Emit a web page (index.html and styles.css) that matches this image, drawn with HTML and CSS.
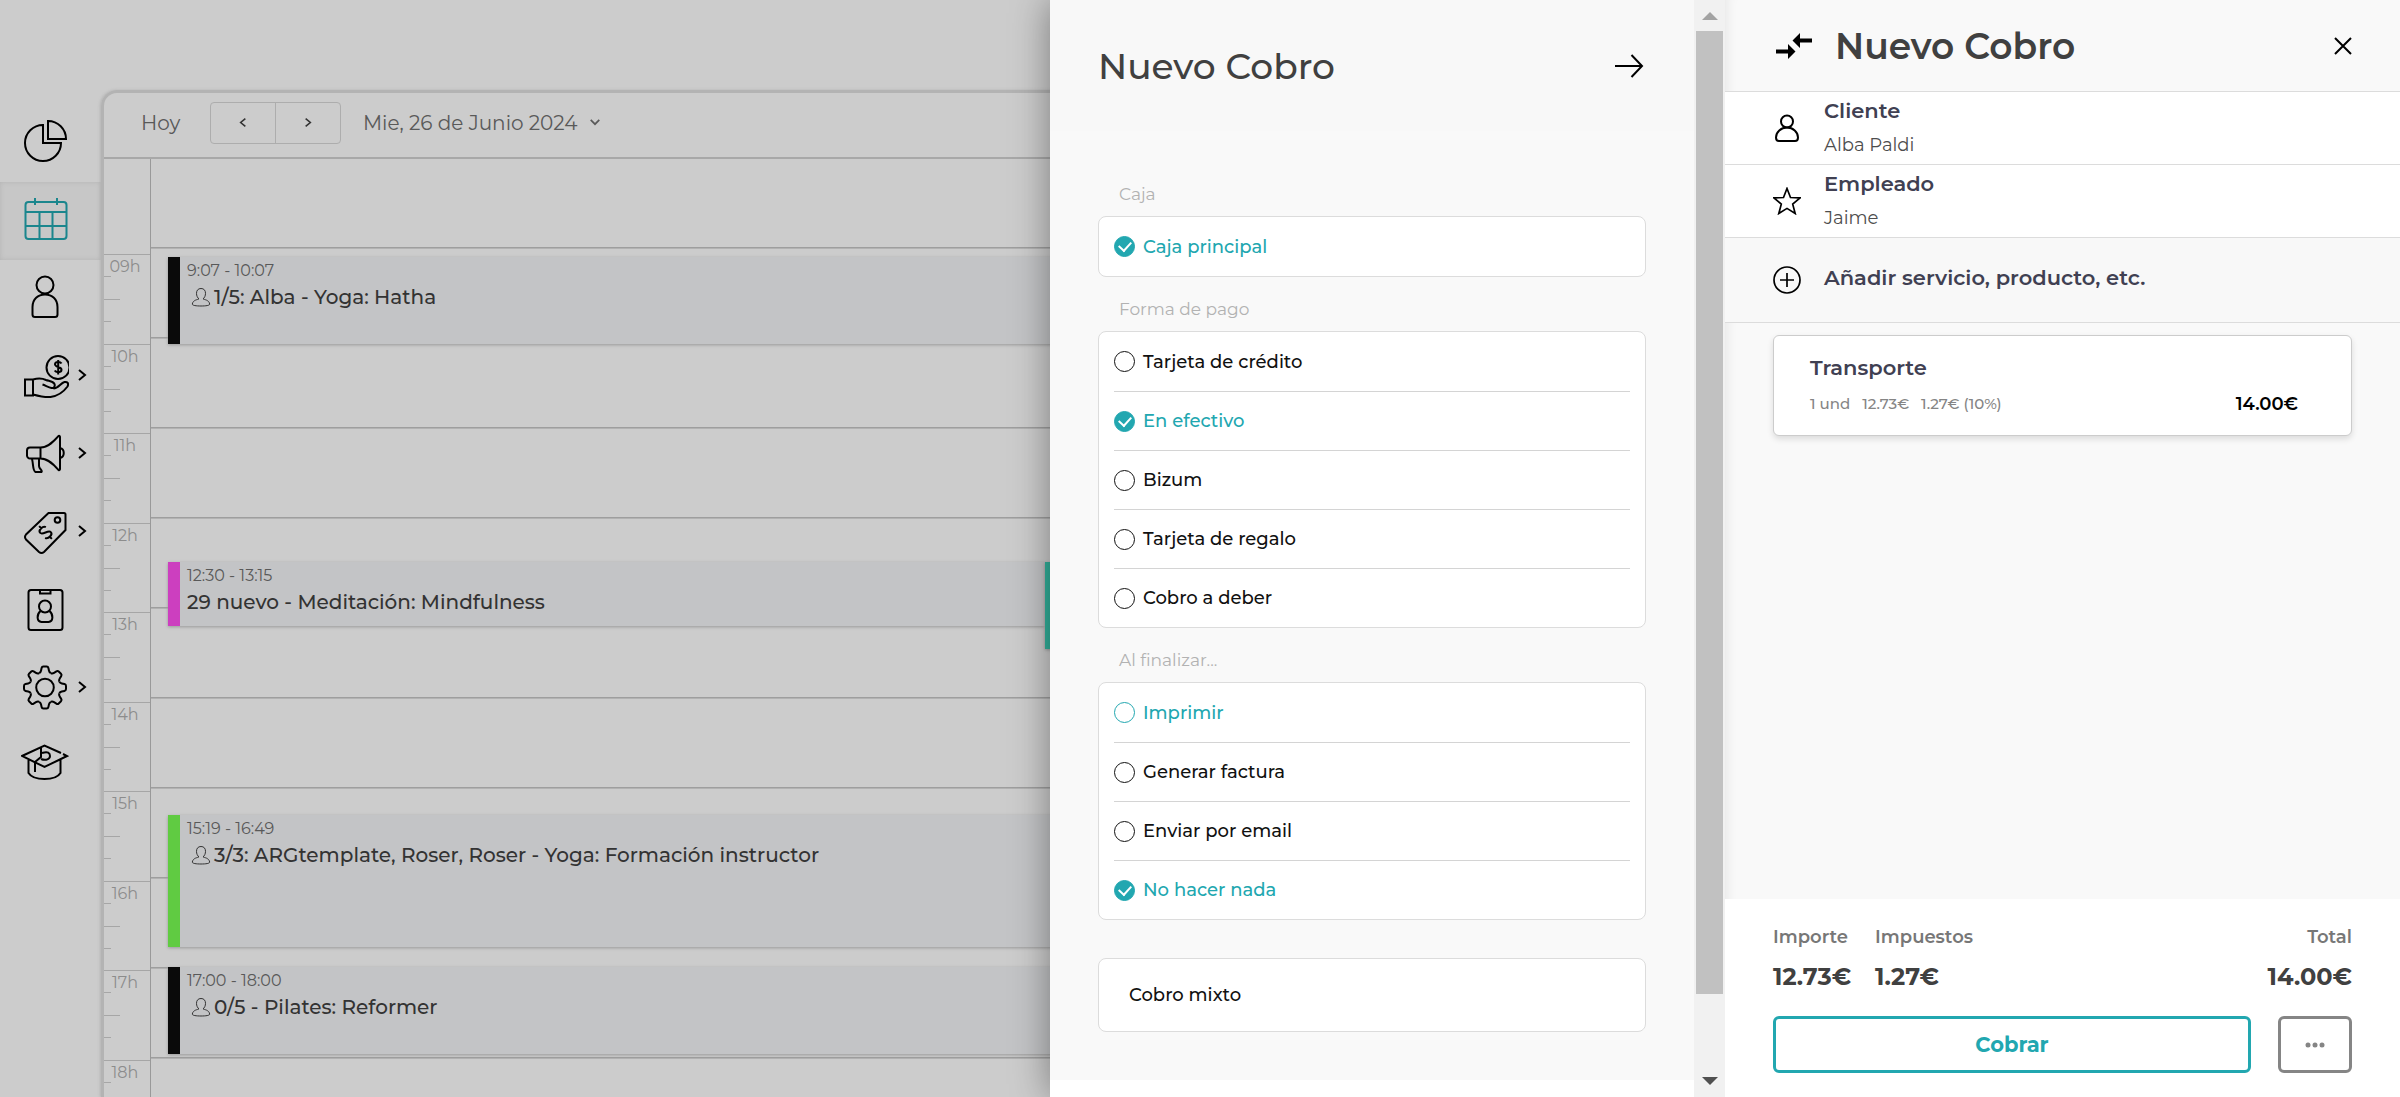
FILE: index.html
```html
<!DOCTYPE html>
<html lang="es">
<head>
<meta charset="utf-8">
<meta name="viewport" content="width=device-width, initial-scale=1">
<title>Nuevo Cobro</title>
<link rel="stylesheet" href="styles.css">
</head>
<body>
<svg class="sprite" aria-hidden="true">
  <symbol id="chevron" viewBox="0 0 10 14"><path d="M2 2l6 5-6 5"/></symbol>
  <symbol id="attendee" viewBox="0 0 20 20"><path d="M10 1.500c-3 0-4.500 2-4.500 4.800 0 2.400 1 4.600 2.500 5.600-1 .7-6 .9-6.700 5.100-.2 1.500 4 2 8.700 2s8.900-.5 8.700-2c-.7-4.200-5.700-4.400-6.700-5.100 1.500-1 2.500-3.200 2.500-5.600 0-2.800-1.500-4.800-4.500-4.800z"/></symbol>
  <defs><path id="tooth" d="M18.100 10.200q1.500-.7 1.900-2.500l.6-2.700q.3-1.500 1.800-1.500h3.200q1.500 0 1.800 1.500l.6 2.700q.4 1.800 1.900 2.500"/></defs>
</svg>

<div class="app">
  <nav class="sidebar" aria-label="Principal">
    <a class="nav-item" href="#" aria-label="Informes">
      <svg class="nav-icon" viewBox="0 0 48 48"><path d="M22 8v18h18A18 18 0 1 1 22 8zM27 4v18h18A18 18 0 0 0 27 4z"/></svg>
    </a>
    <a class="nav-item active" href="#" aria-label="Calendario">
      <svg class="nav-icon" viewBox="0 0 48 48"><rect x="4.500" y="7" width="41" height="37" rx="3"/><path d="M4.500 17h41M4.500 31h41M18.500 17v27M31.500 17v27M14 3v7M36 3v7"/></svg>
    </a>
    <a class="nav-item" href="#" aria-label="Clientes">
      <svg class="nav-icon" viewBox="0 0 48 48"><circle cx="24" cy="12" r="8.500"/><path d="M11.500 34c0-8 5.500-12.500 12.500-12.500S36.500 26 36.500 34v7.500a2.500 2.500 0 0 1-2.500 2.500H14a2.500 2.500 0 0 1-2.500-2.500z"/></svg>
    </a>
    <a class="nav-item" href="#" aria-label="Ventas">
      <svg class="nav-icon" viewBox="0 0 48 48"><circle cx="37" cy="16.500" r="11.500"/><path d="M40.500 12.500c-1-2-6.500-2.500-6.500.8 0 3.200 6.500 2.200 6.500 5.500 0 3-5.500 3-6.800.7M37.200 9v14.500M4 28.500h8v16H4zM12 28.500c5-1.500 9-1.500 13 .5 3 1.200 7 1 8.500 4 .8 2-.5 4.500-3 4-3-.7-6-2.500-9-3.500M32.500 37.500c5 0 7-5.500 11-6.500 3-.5 4.500 1.500 3 4.500-4 5.500-10 9.500-17 10.500-6 .5-12-1-17.500-2.500"/></svg>
      <svg class="nav-more"><use href="#chevron"/></svg>
    </a>
    <a class="nav-item" href="#" aria-label="Marketing">
      <svg class="nav-icon" viewBox="0 0 48 48"><path d="M19.500 18.500H9a3 3 0 0 0-3 3v5a3 3 0 0 0 3 3h10.500zM19.500 18.500c8 0 14-7 18-11.500q1.500-.5 1.500 1v32q0 1.500-1.500 1c-4-4.500-10-11.500-18-11.500M39 19c5 1 5 9 0 10M11 30c1.500 5 .5 12 3.500 13h6c1.500-1.500-2.500-3-2.500-6v-7"/></svg>
      <svg class="nav-more"><use href="#chevron"/></svg>
    </a>
    <a class="nav-item" href="#" aria-label="Tarifas">
      <svg class="nav-icon" viewBox="0 0 48 48"><path d="M27.500 6H43q1.500 0 1.500 1.500V23L23 45q-2.500 2-5 0L5 32.500q-2-2.500 0-5z"/><circle cx="36.500" cy="13" r="2.800"/><path transform="translate(24.500 25.500) rotate(-45)" d="M4-3.500c-1-3.300-8-3.300-8 0 0 3.500 8 3.500 8 7 0 3.300-7 3.300-8 0M0-9v3M0 6v3"/></svg>
      <svg class="nav-more"><use href="#chevron"/></svg>
    </a>
    <a class="nav-item" href="#" aria-label="Empleados">
      <svg class="nav-icon" viewBox="0 0 48 48"><rect x="7.500" y="5" width="34" height="40" rx="2.500"/><path d="M19 5v3.500h10.500V5"/><circle cx="24" cy="21.500" r="6"/><path d="M19.500 26c-4 3.500-4 10.500 1 11h7c5-.5 5-7.500 1-11"/></svg>
    </a>
    <a class="nav-item" href="#" aria-label="Ajustes">
      <svg class="nav-icon" viewBox="0 0 48 48"><circle cx="24" cy="24.500" r="8.800"/>
        <use href="#tooth"/>
        <use href="#tooth" transform="rotate(45 24 24.500)"/>
        <use href="#tooth" transform="rotate(90 24 24.500)"/>
        <use href="#tooth" transform="rotate(135 24 24.500)"/>
        <use href="#tooth" transform="rotate(180 24 24.500)"/>
        <use href="#tooth" transform="rotate(225 24 24.500)"/>
        <use href="#tooth" transform="rotate(270 24 24.500)"/>
        <use href="#tooth" transform="rotate(315 24 24.500)"/>
      </svg>
      <svg class="nav-more"><use href="#chevron"/></svg>
    </a>
    <a class="nav-item" href="#" aria-label="Formación">
      <svg class="nav-icon" viewBox="0 0 48 48"><path d="M40 12L23.500 4.500 1 15l22.500 11L46 15l-4-2M7.500 19v13c5 8 27 8 32 0V19M20 6v10l-6 5v10M21 12c6-2 8 0 8 3s-4 5-9 3"/></svg>
    </a>
  </nav>

  <main class="calendar">
    <header class="toolbar">
      <button class="text-btn" type="button">Hoy</button>
      <div class="pager">
        <button type="button" aria-label="Día anterior"><svg class="flip"><use href="#chevron"/></svg></button>
        <button type="button" aria-label="Día siguiente"><svg><use href="#chevron"/></svg></button>
      </div>
      <button class="text-btn date" type="button">Mie, 26 de Junio 2024
        <svg class="down" viewBox="0 0 14 10"><path d="M2 2l5 5 5-5"/></svg>
      </button>
    </header>
    <div class="board">
      <ol class="hours">
        <li><span>09h</span></li><li><span>10h</span></li><li><span>11h</span></li><li><span>12h</span></li><li><span>13h</span></li>
        <li><span>14h</span></li><li><span>15h</span></li><li><span>16h</span></li><li><span>17h</span></li><li><span>18h</span></li>
      </ol>
      <div class="day">
        <div class="lane">
          <article class="event wide" style="margin-top:98px;height:87px;--tag:#0a0a0a">
            <time>9:07 - 10:07</time>
            <h3><svg><use href="#attendee"/></svg>1/5: Alba - Yoga: Hatha</h3>
          </article>
          <article class="event" style="margin-top:218px;height:64px;--tag:#cc3fbf">
            <time>12:30 - 13:15</time>
            <h3>29 nuevo - Meditación: Mindfulness</h3>
          </article>
          <article class="event wide" style="margin-top:189px;height:132px;--tag:#60cb42">
            <time>15:19 - 16:49</time>
            <h3><svg><use href="#attendee"/></svg>3/3: ARGtemplate, Roser, Roser - Yoga: Formación instructor</h3>
          </article>
          <article class="event wide" style="margin-top:20px;height:87px;--tag:#0a0a0a">
            <time>17:00 - 18:00</time>
            <h3><svg><use href="#attendee"/></svg>0/5 - Pilates: Reformer</h3>
          </article>
        </div>
        <div class="lane">
          <article class="event" style="margin-top:403px;height:87px;--tag:#32b19b"></article>
        </div>
      </div>
    </div>
  </main>
</div>

<div class="drawers">
  <section class="drawer options">
    <div class="options-scroll">
      <header class="options-head">
        <h2>Nuevo Cobro</h2>
        <button class="icon-btn" type="button" aria-label="Continuar"><svg width="30" height="26" viewBox="0 0 30 26"><path d="M1 13h27M17.500 2L28 13 17.500 24"/></svg></button>
      </header>
      <form class="options-body">
        <fieldset>
          <legend>Caja</legend>
          <div class="card">
            <label><input type="radio" name="caja" checked>Caja principal</label>
          </div>
        </fieldset>
        <fieldset>
          <legend>Forma de pago</legend>
          <div class="card">
            <label><input type="radio" name="pago">Tarjeta de crédito</label>
            <label><input type="radio" name="pago" checked>En efectivo</label>
            <label><input type="radio" name="pago">Bizum</label>
            <label><input type="radio" name="pago">Tarjeta de regalo</label>
            <label><input type="radio" name="pago">Cobro a deber</label>
          </div>
        </fieldset>
        <fieldset>
          <legend>Al finalizar...</legend>
          <div class="card">
            <label class="hover"><input type="radio" name="fin">Imprimir</label>
            <label><input type="radio" name="fin">Generar factura</label>
            <label><input type="radio" name="fin">Enviar por email</label>
            <label><input type="radio" name="fin" checked>No hacer nada</label>
          </div>
        </fieldset>
        <button class="mixed" type="button">Cobro mixto</button>
      </form>
    </div>
    <div class="scrollbar" aria-hidden="true">
      <svg class="sb-arrow" viewBox="0 0 16 8"><path d="M0 8l8-8 8 8z"/></svg>
      <div class="sb-track"><div class="sb-thumb"></div></div>
      <svg class="sb-arrow end" viewBox="0 0 16 8"><path d="M0 0l8 8 8-8z"/></svg>
    </div>
  </section>

  <section class="drawer checkout">
    <header class="checkout-head">
      <svg width="38" height="26" viewBox="0 0 38 26"><path d="M1 16.500h12V11l7.500 7.500L13 26v-5.500H1zM37 5.500H25V0l-7.500 7.500L25 15V9.500h12z"/></svg>
      <h2>Nuevo Cobro</h2>
      <button class="icon-btn" type="button" aria-label="Cerrar"><svg width="20" height="20" viewBox="0 0 20 20"><path d="M2 2l16 16M18 2L2 18"/></svg></button>
    </header>
    <button class="party" type="button">
      <svg viewBox="0 0 28 28"><circle cx="14" cy="7.500" r="6"/><path d="M14 13.500c-6 0-11 4.500-11 10 0 2.500 1 3.500 3 3.500h16c2 0 3-1 3-3.500 0-5.500-5-10-11-10z"/></svg>
      <span class="party-text"><strong>Cliente</strong><span>Alba Paldi</span></span>
    </button>
    <button class="party" type="button">
      <svg class="thin" viewBox="0 0 28 28"><path d="M14 1.500l3.500 9 9.500.4-7.300 6.200 2.500 9.400L14 21.400 5.800 26.500l2.500-9.400L1 10.900l9.500-.4z"/></svg>
      <span class="party-text"><strong>Empleado</strong><span>Jaime</span></span>
    </button>
    <button class="party add" type="button">
      <svg class="thin" viewBox="0 0 28 28"><circle cx="14" cy="14" r="13"/><path d="M14 7v14M7 14h14"/></svg>
      <span class="party-text"><strong>Añadir servicio, producto, etc.</strong></span>
    </button>
    <div class="lines">
      <article class="line">
        <h3>Transporte</h3>
        <p><span>1 und</span><span>12.73€</span><span>1.27€ (10%)</span><b>14.00€</b></p>
      </article>
    </div>
    <footer class="summary">
      <dl>
        <div><dt>Importe</dt><dd>12.73€</dd></div>
        <div><dt>Impuestos</dt><dd>1.27€</dd></div>
        <div class="total"><dt>Total</dt><dd>14.00€</dd></div>
      </dl>
      <div class="actions">
        <button class="pay" type="button">Cobrar</button>
        <button class="more" type="button" aria-label="Más opciones"><svg width="20" height="6" viewBox="0 0 20 6"><circle cx="3" cy="3" r="2.500"/><circle cx="10" cy="3" r="2.500"/><circle cx="17" cy="3" r="2.500"/></svg></button>
      </div>
    </footer>
  </section>
</div>
</body>
</html>
```
FILE: styles.css
```css
:root {
  --teal: #22a7b0;
  --ink: #404040;
  --label: #404052;
  --line: #dcdcdc;
  --dim: #cccccc;
  --dim-line: #a6a6a6;
}

* { box-sizing: border-box; }

body {
  margin: 0;
  height: 100vh;
  overflow: hidden;
  background: var(--dim);
  font-family: Montserrat, Inter, "Open Sans", sans-serif;
  font-size: 18px;
  color: var(--ink);
}

h2, h3, p, dl, dd, ol { margin: 0; padding: 0; }

button {
  padding: 0;
  border: 0;
  background: none;
  font: inherit;
  color: inherit;
  text-align: left;
}

svg { flex: none; fill: none; stroke: currentColor; stroke-width: 2; }

.sprite { position: absolute; width: 0; height: 0; }
.sprite path { stroke: inherit; }

/* App behind the drawers */
.app { display: flex; height: 100%; }

.sidebar { width: 101px; flex: none; padding-top: 104px; }

.nav-item {
  display: flex;
  align-items: center;
  gap: 8px;
  height: 78px;
  padding: 0 0 4px 21px;
  color: #000;
}

.nav-item.active {
  background: #c7c7c7;
  color: #1b868d;
  box-shadow: inset 0 0 5px #b4b4b4;
}

.nav-icon { width: 48px; height: 48px; }
.nav-more { width: 10px; height: 14px; }

.calendar {
  flex: 1;
  display: flex;
  flex-direction: column;
  margin-top: 90px;
  border: 3px solid #b3b3b3;
  border-width: 3px 0 0 3px;
  border-top-left-radius: 16px;
  box-shadow: -1px 0 3px #b3b3b3;
}

.toolbar {
  display: flex;
  align-items: center;
  height: 66px;
  padding: 0 0 5px 37px;
  border-bottom: 2px solid #a8a8a8;
}

.text-btn { width: 69px; font-size: 20px; color: #595959; }

.pager {
  display: flex;
  width: 131px;
  height: 42px;
  margin-right: 22px;
  border: 1px solid #adadad;
  border-radius: 4px;
}

.pager button { flex: 1; display: grid; place-items: center; color: #333; }
.pager button + button { border-left: 1px solid #adadad; }
.pager svg { width: 8px; height: 11px; }
.flip { transform: scaleX(-1); }

.date { width: auto; white-space: nowrap; }
.down { width: 12px; height: 9px; margin-left: 6px; vertical-align: 3px; }

.board { flex: 1; display: flex; min-height: 0; }

.hours {
  width: 47px;
  flex: none;
  padding-top: 95px;
  border-right: 1px solid #999;
  list-style: none;
}

/* quarter-hour ticks below each hour line */
.hours li {
  height: 90px;
  padding-top: 2px;
  border-top: 1px solid var(--dim-line);
  background:
    linear-gradient(var(--dim-line), var(--dim-line)) 0 21px / 7px 1px,
    linear-gradient(var(--dim-line), var(--dim-line)) 0 44px / 16px 1px,
    linear-gradient(var(--dim-line), var(--dim-line)) 0 66px / 7px 1px;
  background-repeat: no-repeat;
  font-size: 16px;
  line-height: 20px;
  text-align: center;
  color: #8c8c8c;
}

.hours li:nth-child(even) { height: 89px; }
.hours span { padding-right: 4px; }

.day {
  flex: 1;
  display: grid;
  grid-template-columns: 11fr 17fr;
  padding-left: 17px;
  background: repeating-linear-gradient(transparent 0 88px, #9e9e9e 88px 89px, #b2b2b2 89px 90px);
}

.event {
  padding: 4px 0 0 7px;
  border-left: 12px solid var(--tag);
  background: #c3c4c6;
  box-shadow: 0 1px 3px #999;
  overflow: hidden;
  white-space: nowrap;
}

.event.wide { margin-right: -60px; }

.event time { display: block; font-size: 16px; line-height: 20px; color: #595959; }
.event h3 {
  display: flex;
  align-items: center;
  margin-top: 1px;
  font-size: 20px;
  line-height: 30px;
  font-weight: 500;
  color: #333;
}
.event svg { width: 20px; height: 20px; margin: 0 3px 0 4px; stroke-width: 1; }

/* Drawers */
.drawers {
  position: fixed;
  inset: 0 0 0 auto;
  display: flex;
  width: 1350px;
  max-width: 100%;
  box-shadow: 0 0 36px rgba(0, 0, 0, .4);
}

.drawer h2 { font-size: 36px; line-height: 46px; font-weight: 500; color: var(--ink); }
.icon-btn { display: grid; color: #000; }

.options { flex: 1; display: flex; background: #fff; }
.options-scroll { flex: 1; background: #fff; }

.options-head {
  display: flex;
  align-items: center;
  justify-content: space-between;
  height: 131px;
  padding: 0 50px 0 48px;
  background: #f8f8f8;
}

.options-body { padding: 31px 48px 48px; background: #f9f9f9; }

fieldset { margin: 0; padding: 22px 0 0; border: 0; }
legend { float: left; width: 100%; margin-bottom: 12px; padding: 0 0 0 21px; font-size: 17px; line-height: 20px; font-weight: 400; color: #b2b2b2; }

.card {
  clear: both;
  padding: 0 15px;
  border: 1px solid var(--line);
  border-radius: 8px;
  background: #fff;
}

.card label {
  display: flex;
  align-items: center;
  gap: 8px;
  height: 59px;
  font-size: 18px;
  font-weight: 500;
  color: #111;
}

.card label + label { border-top: 1px solid #d4d4d4; }
.card label:has(:checked), .card label.hover { color: var(--teal); }

.card input {
  appearance: none;
  display: grid;
  place-items: center;
  width: 21px;
  height: 21px;
  margin: 0;
  border: 1px solid;
  border-radius: 50%;
  color: inherit;
}

.card input:checked { border-color: var(--teal); background: var(--teal); }

.card input:checked::after {
  content: "";
  width: 6px;
  height: 10px;
  margin-bottom: 3px;
  border: solid #fff;
  border-width: 0 2px 2px 0;
  rotate: 42deg;
}

.mixed {
  width: 100%;
  height: 74px;
  margin-top: 38px;
  padding-left: 30px;
  border: 1px solid var(--line);
  border-radius: 8px;
  background: #fff;
  font-weight: 500;
  color: #111;
}

.scrollbar {
  flex: none;
  display: flex;
  flex-direction: column;
  width: 31px;
  padding: 12px 2px;
  background: #f1f1f1;
}

.sb-arrow { width: 16px; height: 8px; margin: 0 auto 11px; fill: #a3a3a3; stroke: none; }
.sb-arrow.end { margin: 11px auto 0; fill: #505050; }
.sb-track { flex: 1; }
.sb-thumb { height: 93%; background: #c1c1c1; }

.checkout {
  width: 50%;
  flex: none;
  display: flex;
  flex-direction: column;
  background: #f9f9f9;
  box-shadow: inset 12px 0 12px -10px rgba(0, 0, 0, .08);
}

.checkout-head {
  display: flex;
  align-items: center;
  height: 92px;
  padding: 0 47px 0 50px;
  border-bottom: 1px solid var(--line);
  color: #000;
}

.checkout-head > svg { fill: #000; stroke: none; }
.checkout-head h2 { flex: 1; margin-left: 22px; font-weight: 600; }

.party {
  display: flex;
  align-items: center;
  gap: 23px;
  height: 73px;
  padding-left: 48px;
  border-bottom: 1px solid var(--line);
  background: #fff;
  color: #000;
}

.party svg { width: 28px; height: 28px; }
.party .thin { stroke-width: 1.7; }
.party-text { display: grid; row-gap: 4px; color: #4d4d4d; }
.party-text span { line-height: 30px; }
.party strong { font-size: 21px; line-height: 30px; font-weight: 600; color: var(--label); }
.party.add { height: 85px; background: #f8f8f8; }
.add .party-text { padding-bottom: 5px; }

.lines { flex: 1; padding: 12px 48px; }

.line {
  padding: 17px 53px 16px 36px;
  border: 1px solid #ccc;
  border-radius: 6px;
  background: #fff;
  box-shadow: 0 3px 6px rgba(0, 0, 0, .12);
}

.line h3 { font-size: 21px; line-height: 30px; font-weight: 600; color: var(--label); }
.line p { display: flex; align-items: center; gap: 12px; margin-top: 6px; font-size: 15px; line-height: 30px; font-weight: 500; color: #858585; }
.line b { margin-left: auto; font-size: 18px; font-weight: 600; color: #000; }

.summary { padding: 24px 48px 24px; background: #fff; }
.summary dl { display: flex; gap: 24px; }
.summary dt { line-height: 28px; font-weight: 600; color: #777; }
.summary dd { margin-top: 12px; font-size: 24px; line-height: 28px; font-weight: 700; }
.total { margin-left: auto; text-align: right; }

.actions { display: flex; gap: 27px; margin-top: 25px; }
.actions button { height: 57px; text-align: center; border-radius: 6px; }
.pay { flex: 1; border: 3px solid var(--teal); font-size: 21px; font-weight: 700; color: var(--teal); }
.more { display: grid; place-items: center; width: 74px; border: 3px solid #858585; color: #858585; }
.more svg { fill: #858585; stroke: none; }
```
